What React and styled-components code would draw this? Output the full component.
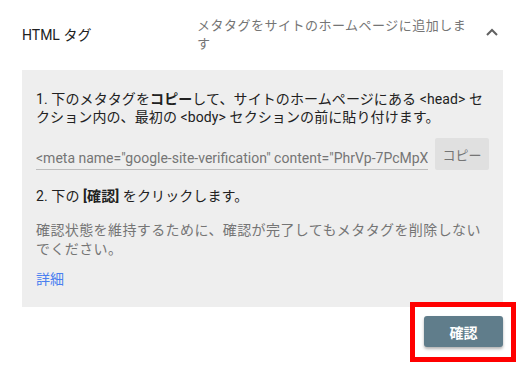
import React from "react";
import styled, { createGlobalStyle } from "styled-components";

const Global = createGlobalStyle`
  html, body { margin: 0; padding: 0; background: #ffffff; }
  body {
    width: 525px;
    height: 365px;
    overflow: hidden;
    font-family: Roboto, "Noto Sans CJK JP", sans-serif;
    color: #212121;
  }
`;

const Page = styled.div`
  width: 525px;
  display: flex;
  flex-direction: column;
`;

const Header = styled.div`
  height: 70px;
  display: grid;
  grid-template-columns: 175px 1fr 24px;
  align-items: center;
  padding: 0 21px 0 22px;
  box-sizing: border-box;
`;

const Title = styled.div`
  font-size: 14px;
  line-height: 18px;
  color: #212121;
`;

const Summary = styled.div`
  font-size: 13px;
  line-height: 18px;
  color: #757575;
  padding-right: 6px;
  letter-spacing: 0.5px;
`;

const Chevron = styled.div`
  display: flex;
  justify-content: center;
  align-items: center;
  color: #616161;
  margin-bottom: 6px;
`;

const Panel = styled.div`
  margin: 0 22px;
  background: #eeeeee;
  padding: 20px 14px 19px 14px;
  display: flex;
  flex-direction: column;
`;

const Step = styled.p`
  margin: 0;
  font-size: 14px;
  line-height: 18px;
  color: #212121;
  letter-spacing: 0.1px;
`;

const Note = styled.p`
  margin: 16px 0 0;
  font-size: 14px;
  line-height: 19px;
  color: #757575;
  letter-spacing: 0.4px;
`;

const CopyRow = styled.div`
  display: flex;
  align-items: stretch;
  gap: 7px;
  margin: 12px 0 17px;
`;

const CodeField = styled.div`
  flex: 1;
  min-width: 0;
  height: 32px;
  box-sizing: border-box;
  border-bottom: 1px solid #bdbdbd;
  font-size: 14px;
  color: #757575;
  white-space: nowrap;
  overflow: hidden;
  display: flex;
  align-items: flex-end;
  padding-bottom: 2px;
  line-height: 18px;
`;

const CopyButton = styled.button`
  flex: none;
  width: 54px;
  height: 32px;
  border: none;
  border-radius: 2px;
  background: #e0e0e0;
  color: #757575;
  font-family: Roboto, "Noto Sans CJK JP", sans-serif;
  font-size: 13px;
  padding: 0;
`;

const Link = styled.a`
  margin-top: 11px;
  font-size: 14px;
  line-height: 18px;
  color: #4a7ff0;
  text-decoration: none;
`;

const Footer = styled.div`
  display: flex;
  justify-content: flex-end;
  padding: 9px 22px 0 0;
`;

const ConfirmWrap = styled.div`
  position: relative;
`;

const Highlight = styled.div`
  position: absolute;
  top: -14px;
  left: -14px;
  right: -13px;
  bottom: -15px;
  border: 5px solid #ff0000;
  pointer-events: none;
`;

const ConfirmButton = styled.button`
  display: block;
  width: 79px;
  height: 31px;
  border: none;
  border-radius: 3px;
  background: #607d8b;
  color: #ffffff;
  font-family: Roboto, "Noto Sans CJK JP", sans-serif;
  font-size: 14px;
  font-weight: 700;
  box-shadow: 0 2px 3px rgba(0, 0, 0, 0.3);
  padding: 0;
`;

export default function App() {
  return (
    <Page>
      <Global />
      <Header>
        <Title>HTML タグ</Title>
        <Summary>メタタグをサイトのホームページに追加します</Summary>
        <Chevron>
          <svg width="12" height="8" viewBox="0 0 12 8">
            <path d="M1 7 L6 2 L11 7" fill="none" stroke="currentColor" strokeWidth="2" />
          </svg>
        </Chevron>
      </Header>
      <Panel>
        <Step>
          1. 下のメタタグを<b>コピー</b>して、サイトのホームページにある&nbsp;&lt;head&gt;&nbsp;セクション内の、最初の &lt;body&gt; セクションの前に貼り付けます。
        </Step>
        <CopyRow>
          <CodeField>&lt;meta name="google-site-verification" content="PhrVp-7PcMpXq2Lk9Vd" /&gt;</CodeField>
          <CopyButton>コピー</CopyButton>
        </CopyRow>
        <Step>
          2. 下の <b>[確認]</b> をクリックします。
        </Step>
        <Note>確認状態を維持するために、確認が完了してもメタタグを削除しないでください。</Note>
        <Link href="#">詳細</Link>
      </Panel>
      <Footer>
        <ConfirmWrap>
          <ConfirmButton>確認</ConfirmButton>
          <Highlight />
        </ConfirmWrap>
      </Footer>
    </Page>
  );
}
